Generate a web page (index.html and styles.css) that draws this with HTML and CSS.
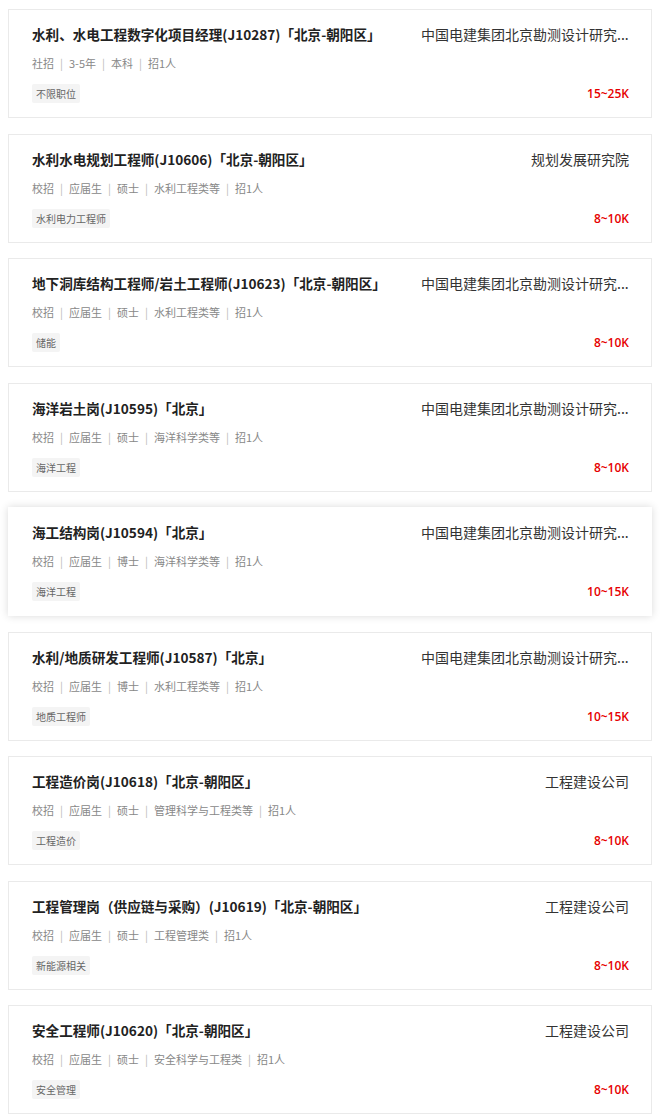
FILE: index.html
```html
<!DOCTYPE html>
<html lang="zh-CN">
<head>
    <meta charset="UTF-8">
    <meta name="viewport" content="width=device-width, initial-scale=1.0">
    <title>职位列表</title>
    <link rel="stylesheet" href="styles.css">
</head>
<body>
    <div class="job-list">
        <div class="job-card">
            <div class="job-top">
                <div class="job-title">水利、水电工程数字化项目经理(J10287)「北京-朝阳区」</div>
                <div class="job-company cut">中国电建集团北京勘测设计研究...</div>
            </div>
            <div class="job-meta"><span>社招</span><i>|</i><span>3-5年</span><i>|</i><span>本科</span><i>|</i><span>招1人</span></div>
            <div class="job-bottom">
                <span class="job-tag">不限职位</span>
                <span class="job-salary">15~25K</span>
            </div>
        </div>

        <div class="job-card">
            <div class="job-top">
                <div class="job-title">水利水电规划工程师(J10606)「北京-朝阳区」</div>
                <div class="job-company">规划发展研究院</div>
            </div>
            <div class="job-meta"><span>校招</span><i>|</i><span>应届生</span><i>|</i><span>硕士</span><i>|</i><span>水利工程类等</span><i>|</i><span>招1人</span></div>
            <div class="job-bottom">
                <span class="job-tag">水利电力工程师</span>
                <span class="job-salary">8~10K</span>
            </div>
        </div>

        <div class="job-card">
            <div class="job-top">
                <div class="job-title">地下洞库结构工程师/岩土工程师(J10623)「北京-朝阳区」</div>
                <div class="job-company cut">中国电建集团北京勘测设计研究...</div>
            </div>
            <div class="job-meta"><span>校招</span><i>|</i><span>应届生</span><i>|</i><span>硕士</span><i>|</i><span>水利工程类等</span><i>|</i><span>招1人</span></div>
            <div class="job-bottom">
                <span class="job-tag">储能</span>
                <span class="job-salary">8~10K</span>
            </div>
        </div>

        <div class="job-card">
            <div class="job-top">
                <div class="job-title">海洋岩土岗(J10595)「北京」</div>
                <div class="job-company cut">中国电建集团北京勘测设计研究...</div>
            </div>
            <div class="job-meta"><span>校招</span><i>|</i><span>应届生</span><i>|</i><span>硕士</span><i>|</i><span>海洋科学类等</span><i>|</i><span>招1人</span></div>
            <div class="job-bottom">
                <span class="job-tag">海洋工程</span>
                <span class="job-salary">8~10K</span>
            </div>
        </div>

        <div class="job-card active">
            <div class="job-top">
                <div class="job-title">海工结构岗(J10594)「北京」</div>
                <div class="job-company cut">中国电建集团北京勘测设计研究...</div>
            </div>
            <div class="job-meta"><span>校招</span><i>|</i><span>应届生</span><i>|</i><span>博士</span><i>|</i><span>海洋科学类等</span><i>|</i><span>招1人</span></div>
            <div class="job-bottom">
                <span class="job-tag">海洋工程</span>
                <span class="job-salary">10~15K</span>
            </div>
        </div>

        <div class="job-card">
            <div class="job-top">
                <div class="job-title">水利/地质研发工程师(J10587)「北京」</div>
                <div class="job-company cut">中国电建集团北京勘测设计研究...</div>
            </div>
            <div class="job-meta"><span>校招</span><i>|</i><span>应届生</span><i>|</i><span>博士</span><i>|</i><span>水利工程类等</span><i>|</i><span>招1人</span></div>
            <div class="job-bottom">
                <span class="job-tag">地质工程师</span>
                <span class="job-salary">10~15K</span>
            </div>
        </div>

        <div class="job-card">
            <div class="job-top">
                <div class="job-title">工程造价岗(J10618)「北京-朝阳区」</div>
                <div class="job-company">工程建设公司</div>
            </div>
            <div class="job-meta"><span>校招</span><i>|</i><span>应届生</span><i>|</i><span>硕士</span><i>|</i><span>管理科学与工程类等</span><i>|</i><span>招1人</span></div>
            <div class="job-bottom">
                <span class="job-tag">工程造价</span>
                <span class="job-salary">8~10K</span>
            </div>
        </div>

        <div class="job-card">
            <div class="job-top">
                <div class="job-title">工程管理岗（供应链与采购）(J10619)「北京-朝阳区」</div>
                <div class="job-company">工程建设公司</div>
            </div>
            <div class="job-meta"><span>校招</span><i>|</i><span>应届生</span><i>|</i><span>硕士</span><i>|</i><span>工程管理类</span><i>|</i><span>招1人</span></div>
            <div class="job-bottom">
                <span class="job-tag">新能源相关</span>
                <span class="job-salary">8~10K</span>
            </div>
        </div>

        <div class="job-card">
            <div class="job-top">
                <div class="job-title">安全工程师(J10620)「北京-朝阳区」</div>
                <div class="job-company">工程建设公司</div>
            </div>
            <div class="job-meta"><span>校招</span><i>|</i><span>应届生</span><i>|</i><span>硕士</span><i>|</i><span>安全科学与工程类</span><i>|</i><span>招1人</span></div>
            <div class="job-bottom">
                <span class="job-tag">安全管理</span>
                <span class="job-salary">8~10K</span>
            </div>
        </div>
    </div>
</body>
</html>
```

FILE: styles.css
```css
body {
    margin: 0;
    padding: 0;
    background: #fff;
    font-family: "Noto Sans CJK SC", sans-serif;
    color: #333;
}

.job-list {
    padding: 9px 15px 0 8px;
}

/* tarjeta de cada puesto */
.job-card {
    border: 1px solid #eaeaea;
    padding: 14px 22px 14px 23px;
    margin-bottom: 15.5px;
    background: #fff;
}

.job-card.active {
    border-color: transparent;
    box-shadow: 0 0 8px rgba(0, 0, 0, 0.15);
}

.job-top {
    display: flex;
    justify-content: space-between;
    height: 20px;
    line-height: 20px;
}

.job-title {
    font-size: 13.6px;
    font-weight: bold;
    color: #222;
    white-space: nowrap;
}

.job-company {
    width: 208px;
    font-size: 14px;
    color: #333;
    text-align: right;
    white-space: nowrap;
    flex-shrink: 0;
}

/* nombre largo ya recortado: se alinea a la izquierda de la caja */
.job-company.cut {
    text-align: left;
}

.job-meta {
    margin-top: 11px;
    height: 16px;
    line-height: 16px;
    font-size: 11px;
    color: #888;
}

.job-meta i {
    font-style: normal;
    color: #bbb;
    margin: 0 6px;
}

.job-bottom {
    margin-top: 13px;
    display: flex;
    justify-content: space-between;
    align-items: center;
    height: 19px;
}

.job-tag {
    height: 19px;
    line-height: 19px;
    padding: 0 4px;
    font-size: 10px;
    color: #666;
    background: #f4f4f4;
    border-radius: 2px;
}

.job-salary {
    font-family: "Open Sans", "Noto Sans CJK SC", sans-serif;
    font-size: 12px;
    font-weight: 600;
    color: #e60000;
}
```
